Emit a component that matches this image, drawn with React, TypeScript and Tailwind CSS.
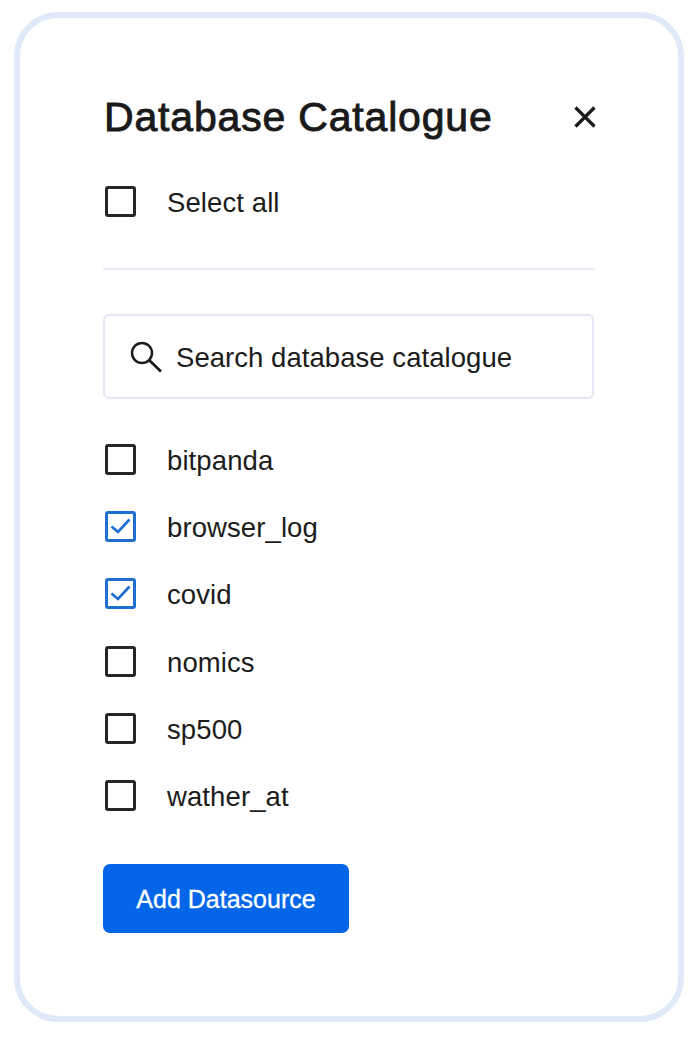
import React from "react";

function Box({ checked }: { checked?: boolean }) {
  return (
    <span
      className={`flex h-[31px] w-[31px] shrink-0 items-center justify-center rounded-[3px] border-[3px] ${
        checked ? "border-[#1f6fd0]" : "border-[#262626]"
      }`}
    >
      {checked && (
        <svg width="22" height="22" viewBox="0 0 22 22" fill="none" className="shrink-0">
          <path d="M1.5 10.5 L8 16 L19.5 3.5" stroke="#1f6fd0" strokeWidth="2.7" />
        </svg>
      )}
    </span>
  );
}

function Row({ label, checked, className = "" }: { label: string; checked?: boolean; className?: string }) {
  return (
    <div className={`flex h-[31px] items-center gap-[31px] ${className}`}>
      <Box checked={checked} />
      <span className="mt-[2px] text-[27.5px] leading-[31px] tracking-[0.1px] text-[#1c1c1c]">{label}</span>
    </div>
  );
}

const items: [string, boolean][] = [
  ["bitpanda", false],
  ["browser_log", true],
  ["covid", true],
  ["nomics", false],
  ["sp500", false],
  ["wather_at", false],
];

export default function App() {
  return (
    <div className="h-[1046px] w-[699px] bg-white pl-[14px] pt-3 font-['Liberation_Sans',Arial,sans-serif]">
      <div className="h-[1010px] w-[670px] rounded-[44px] border-[6px] border-[#dfe9f7] bg-white pl-[83px] pr-[83px] pt-[71px]">
        <div className="flex h-[56px] items-center justify-between">
          <h1 className="ml-[1px] text-[41px] font-normal leading-[56px] tracking-[0.82px] text-[#1a1a1a] [-webkit-text-stroke:0.9px_#1a1a1a]">
            Database Catalogue
          </h1>
          <svg width="28" height="28" viewBox="0 0 28 28" fill="none" className="mr-[-4px] shrink-0">
            <path d="M4.5 4.5 L23.5 23.5 M23.5 4.5 L4.5 23.5" stroke="#1a1a1a" strokeWidth="3.2" />
          </svg>
        </div>
        <Row label="Select all" className="ml-[2px] mt-[41px]" />
        <div className="mt-[51px] h-[2px] w-[492px] bg-[#e8eaf6]" />
        <div className="mt-[44px] flex h-[85px] w-[491px] items-center rounded-[6px] border-2 border-[#e3e6f3] bg-white pl-[25px]">
          <svg width="36" height="36" viewBox="0 0 36 36" fill="none" className="shrink-0">
            <circle cx="12" cy="14" r="10" stroke="#1c1c1c" strokeWidth="2.5" />
            <path d="M19.5 21.5 L31 32.5" stroke="#1c1c1c" strokeWidth="2.8" />
          </svg>
          <span className="ml-[10px] mt-[2px] text-[27.5px] leading-[31px] tracking-[0.05px] text-[#1c1c1c]">Search database catalogue</span>
        </div>
        <div className="ml-[2px] mt-[45px] flex flex-col gap-[36.2px]">
          {items.map(([label, checked]) => (
            <Row key={label} label={label} checked={checked} />
          ))}
        </div>
        <button className="mt-[53px] flex h-[69px] w-[246px] items-center justify-center rounded-[7px] bg-[#0366e8] pt-[2px] text-[25px] text-white [-webkit-text-stroke:0.3px_#ffffff]">
          Add Datasource
        </button>
      </div>
    </div>
  );
}
